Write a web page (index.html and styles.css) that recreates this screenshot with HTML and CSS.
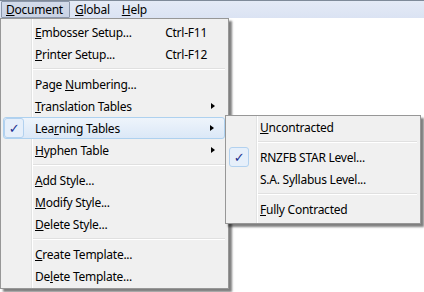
FILE: index.html
```html
<!DOCTYPE html>
<html>
<head>
<meta charset="utf-8">
<link rel="stylesheet" href="styles.css">
</head>
<body>
<div class="app">
  <div class="menubar">
    <span class="mb-item active"><u>D</u>ocument</span>
    <span class="mb-item"><u>G</u>lobal</span>
    <span class="mb-item"><u>H</u>elp</span>
  </div>
  <div class="content"></div>

  <div class="menu main-menu">
    <div class="item"><span class="icon"></span><span class="label"><u>E</u>mbosser Setup...</span><span class="key">Ctrl-F11</span><span class="arrow"></span></div>
    <div class="item"><span class="icon"></span><span class="label"><u>P</u>rinter Setup...</span><span class="key">Ctrl-F12</span><span class="arrow"></span></div>
    <div class="sep"></div>
    <div class="item"><span class="icon"></span><span class="label">Page <u>N</u>umbering...</span><span class="key"></span><span class="arrow"></span></div>
    <div class="item"><span class="icon"></span><span class="label"><u>T</u>ranslation Tables</span><span class="key"></span><span class="arrow"><i class="tri"></i></span></div>
    <div class="item hot"><span class="icon checked">✓</span><span class="label">Lea<u>r</u>ning Tables</span><span class="key"></span><span class="arrow"><i class="tri"></i></span></div>
    <div class="item"><span class="icon"></span><span class="label"><u>H</u>yphen Table</span><span class="key"></span><span class="arrow"><i class="tri"></i></span></div>
    <div class="sep"></div>
    <div class="item"><span class="icon"></span><span class="label"><u>A</u>dd Style...</span><span class="key"></span><span class="arrow"></span></div>
    <div class="item"><span class="icon"></span><span class="label"><u>M</u>odify Style...</span><span class="key"></span><span class="arrow"></span></div>
    <div class="item"><span class="icon"></span><span class="label"><u>D</u>elete Style...</span><span class="key"></span><span class="arrow"></span></div>
    <div class="sep"></div>
    <div class="item"><span class="icon"></span><span class="label"><u>C</u>reate Template...</span><span class="key"></span><span class="arrow"></span></div>
    <div class="item"><span class="icon"></span><span class="label">De<u>l</u>ete Template...</span><span class="key"></span><span class="arrow"></span></div>
  </div>

  <div class="menu sub-menu">
    <div class="item"><span class="icon"></span><span class="label"><u>U</u>ncontracted</span></div>
    <div class="sep"></div>
    <div class="item"><span class="icon checked">✓</span><span class="label">RNZFB STAR Level...</span></div>
    <div class="item"><span class="icon"></span><span class="label">S.A. Syllabus Level...</span></div>
    <div class="sep"></div>
    <div class="item"><span class="icon"></span><span class="label"><u>F</u>ully Contracted</span></div>
  </div>
</div>
</body>
</html>
```

FILE: styles.css
```css
html, body {
  margin: 0;
  padding: 0;
  background: #ffffff;
}
body {
  font-family: "Noto Sans", "Open Sans", sans-serif;
  font-size: 12px;
  letter-spacing: -0.25px;
  color: #000;
}
.app {
  position: relative;
  width: 424px;
  height: 292px;
  overflow: hidden;
}
.menubar {
  height: 18px;
  border-top: 1px solid #7f8a99;
  background: linear-gradient(#e4eaf6, #dbe3f3);
  display: flex;
  align-items: center;
  padding-left: 1px;
  box-sizing: border-box;
}
.mb-item {
  height: 17px;
  line-height: 15px;
  padding: 0 6px 0 4px;
  box-sizing: border-box;
  border: 1px solid transparent;
}
.mb-item.active {
  border-color: #8b97ab;
  background: linear-gradient(#d3dbea, #c9d2e4);
  border-radius: 1px;
}
.content {
  height: 274px;
  background: #fff;
}
.menu {
  position: absolute;
  background: #f0f0f0;
  border: 1px solid #979797;
  box-shadow: 3px 3px 2px rgba(0, 0, 0, 0.5);
  padding: 2px;
  box-sizing: border-box;
  background-image: linear-gradient(to right, transparent 28px, #e2e3e3 28px, #e2e3e3 29px, #ffffff 29px, #ffffff 30px, transparent 30px);
  background-origin: padding-box;
  background-position: 2px 0;
  background-repeat: no-repeat;
}
.main-menu {
  left: 0;
  top: 18px;
  width: 229px;
  height: 271px;
}
.sub-menu {
  left: 225px;
  top: 115px;
  width: 196px;
  height: 109px;
  padding-top: 0;
}
.item {
  display: flex;
  align-items: center;
  height: 22px;
  position: relative;
  border: 1px solid transparent;
  border-radius: 3px;
  box-sizing: border-box;
}
.item.hot {
  border-color: #aed1ef;
  background: linear-gradient(#eef4fb, #dbe8f7);
  margin-right: 1px;
}
.icon {
  width: 20px;
  height: 20px;
  margin-right: 11px;
  display: flex;
  align-items: center;
  justify-content: center;
  box-sizing: border-box;
  color: #21308f;
  font-family: "DejaVu Sans", sans-serif;
  font-size: 13px;
  border-radius: 3px;
}
.icon.checked {
  border: 1px solid #b2d1ef;
  background: #e6effa;
}
.label {
  flex: 1;
  white-space: nowrap;
}
.key {
  padding-right: 4px;
}
.arrow {
  width: 14px;
  display: flex;
  align-items: center;
}
.tri {
  width: 0;
  height: 0;
  border-top: 3.5px solid transparent;
  border-bottom: 3.5px solid transparent;
  border-left: 4px solid #000;
}
.sep {
  height: 8px;
  margin-left: 30px;
  margin-right: 1px;
  background: linear-gradient(transparent 3px, #e0e0e0 3px, #e0e0e0 4px, #ffffff 4px, #ffffff 5px, transparent 5px);
}
u {
  text-decoration: underline;
  text-underline-offset: 1px;
}
```
